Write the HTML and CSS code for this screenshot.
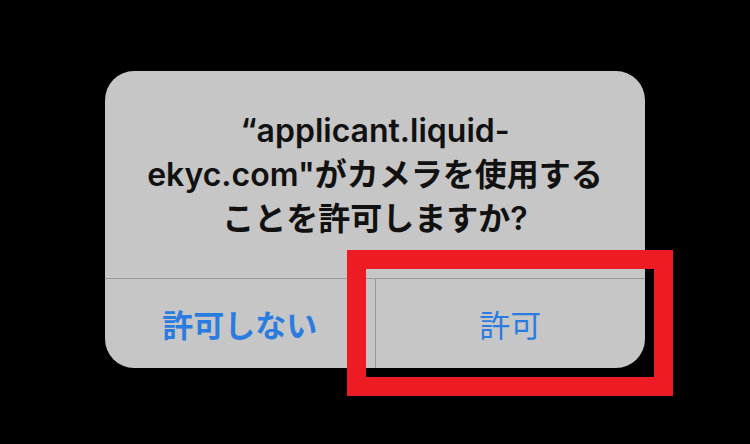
FILE: index.html
```html
<!DOCTYPE html>
<html lang="ja">
<head>
<meta charset="utf-8">
<link rel="stylesheet" href="styles.css">
</head>
<body>
<div class="screen">
  <div class="alert">
    <div class="title">“applicant.liquid-<br>ekyc.com"がカメラを使用する<br>ことを許可しますか?</div>
    <div class="actions">
      <div class="btn btn-deny">許可しない</div>
      <div class="btn btn-allow">許可</div>
    </div>
  </div>
  <div class="highlight"></div>
</div>
</body>
</html>
```
FILE: styles.css
```css
html, body {
  margin: 0;
  padding: 0;
  background: #000;
}
.screen {
  position: relative;
  width: 750px;
  height: 444px;
  background: #000;
  padding: 71px 0 0 105px;
  box-sizing: border-box;
  font-family: "Inter", "Noto Sans CJK JP", sans-serif;
}
.alert {
  width: 540px;
  height: 297px;
  background: #c6c6c6;
  border-radius: 29px;
  display: flex;
  flex-direction: column;
  overflow: hidden;
}
.title {
  height: 208px;
  box-sizing: border-box;
  padding-top: 38px;
  text-align: center;
  font-size: 32px;
  line-height: 44px;
  font-weight: 600;
  color: #111;
  border-bottom: 1px solid #999;
}
.actions {
  flex: 1;
  display: flex;
}
.btn {
  flex: 1;
  display: flex;
  align-items: center;
  justify-content: center;
  font-size: 31px;
  color: #2a7ce0;
}
.btn-deny {
  font-weight: 700;
  border-right: 1px solid #999;
}
.btn-allow {
  font-weight: 400;
}
.highlight {
  position: absolute;
  left: 347px;
  top: 250px;
  width: 326px;
  height: 146px;
  box-sizing: border-box;
  border: 19px solid #ed1c24;
}
```
